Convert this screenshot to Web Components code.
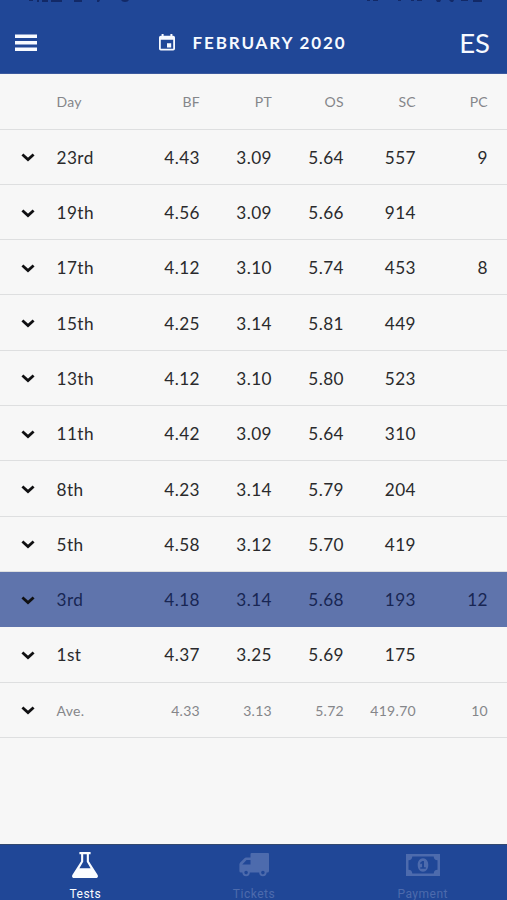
<!DOCTYPE html>
<html lang="en">
<head>
<meta charset="UTF-8">
<meta name="viewport" content="width=device-width, initial-scale=1.0">
<title>Tests</title>
<style>
    body {
        margin: 0;
        background: #f7f7f7;
        font-family: Lato, "Open Sans", sans-serif;
    }
</style>
</head>
<body>
<milk-app>
    <app-header slot="header" month="FEBRUARY 2020" lang-label="ES"></app-header>
    <tests-table></tests-table>
    <tab-bar slot="footer">
        <tab-item icon="flask" active>Tests</tab-item>
        <tab-item icon="truck">Tickets</tab-item>
        <tab-item icon="money">Payment</tab-item>
    </tab-bar>
</milk-app>

<script>
const TESTS = [
    ['23rd', '4.43', '3.09', '5.64', '557', '9'],
    ['19th', '4.56', '3.09', '5.66', '914', ''],
    ['17th', '4.12', '3.10', '5.74', '453', '8'],
    ['15th', '4.25', '3.14', '5.81', '449', ''],
    ['13th', '4.12', '3.10', '5.80', '523', ''],
    ['11th', '4.42', '3.09', '5.64', '310', ''],
    ['8th', '4.23', '3.14', '5.79', '204', ''],
    ['5th', '4.58', '3.12', '5.70', '419', ''],
    ['3rd', '4.18', '3.14', '5.68', '193', '12'],
    ['1st', '4.37', '3.25', '5.69', '175', '']
];

const ICONS = {
    flask: `
        <svg width="26" height="26" viewBox="0 0 26 26">
            <path fill="currentColor" fill-rule="evenodd" d="M7.4 0h11.2v2.3h-1.7v6.9l8.6 13.6c1 1.7.2 3.2-1.6 3.2H2.1C.3 26-.5 24.5.5 22.8L9.1 9.2V2.3H7.4zM11.2 2.3v7.5L7.4 16.3h11.2L14.8 9.8V2.3z"/>
        </svg>`,
    truck: `
        <svg width="30" height="24" viewBox="0 0 30 24">
            <path fill="currentColor" fill-rule="evenodd" d="M12.500 0H29q1 0 1 1v17q0 1.600-1.600 1.600h-.8a3.700 3.700 0 0 1-7.400 0h-9.400a3.700 3.700 0 0 1-7.400 0H2Q.4 19.600.4 18v-6.500q0-1 .8-1.900l4-4.200Q6 4.500 7.200 4.500h4.300V1q0-1 1-1zM7.500 7 3.300 11.500h8.200V7zM7.100 17.800a1.800 1.800 0 1 0 0 3.600 1.800 1.800 0 0 0 0-3.600zM23.900 17.800a1.800 1.800 0 1 0 0 3.600 1.800 1.800 0 0 0 0-3.600z"/>
        </svg>`,
    money: `
        <svg width="34" height="22" viewBox="0 0 34 22">
            <path fill="currentColor" fill-rule="evenodd" d="M0 0h34v22H0zM6.300 2.500A4 4 0 0 1 2.500 6.300v9.400a4 4 0 0 1 3.800 3.800h21.400a4 4 0 0 1 3.800-3.800V6.300a4 4 0 0 1-3.800-3.800z"/>
            <path fill="currentColor" fill-rule="evenodd" d="M17 4.300c3.300 0 5.300 3 5.300 6.700s-2 6.700-5.300 6.700-5.300-3-5.300-6.700 2-6.700 5.300-6.700zM16.200 7l-2.300 2 1 1.200 1.200-.9v3.900h-1.800v1.500h5.500v-1.500H18V7z"/>
        </svg>`
};

class MilkApp extends HTMLElement {
    constructor() {
        super();
        this.attachShadow({ mode: 'open' });
    }

    connectedCallback() {
        this.shadowRoot.innerHTML = `
            <style>
                :host {
                    display: flex;
                    flex-direction: column;
                    height: 900px;
                    overflow: hidden;
                }
                main {
                    flex: 1;
                    min-height: 0;
                    overflow: hidden;
                }
            </style>
            <slot name="header"></slot>
            <main><slot></slot></main>
            <slot name="footer"></slot>
        `;
    }
}

class AppHeader extends HTMLElement {
    constructor() {
        super();
        this.attachShadow({ mode: 'open' });
    }

    connectedCallback() {
        const month = this.getAttribute('month') || '';
        const lang = this.getAttribute('lang-label') || 'EN';

        this.shadowRoot.innerHTML = `
            <style>
                :host {
                    display: block;
                    flex: none;
                    height: 74px;
                    box-sizing: border-box;
                    background: #204797;
                    border-bottom: 1px solid #3c5a9f;
                    color: #f7faff;
                }
                .status {
                    display: block;
                    height: 12px;
                }
                .bar {
                    display: grid;
                    grid-template-columns: 1fr auto 1fr;
                    align-items: center;
                    height: 61px;
                    padding: 0 17px 0 15px;
                }
                .menu {
                    display: block;
                }
                .month {
                    display: flex;
                    align-items: center;
                    gap: 18px;
                    font-size: 17px;
                    font-weight: 700;
                    letter-spacing: 1.850px;
                    line-height: 24px;
                }
                .lang {
                    justify-self: end;
                    font-size: 27.500px;
                    line-height: 30px;
                }
            </style>
            <svg class="status" width="507" height="12" fill="#122967">
                <path d="M29 0h4v1h-4zM37 0h2v2h-2zM42 0h6v2h-6zM51 0h11v2h-11zM74 0h8v2h-8zM97 0h3l-1 2h-2zM121 0h8q-1 2-4 2t-4-2zM367 0h3v1h-3zM373 0h5v1h-5zM398 0h3v1h-3zM411 0h3v1h-3zM417 0h5v1h-5zM436 0h5l-1 2h-3zM449 0h5l-1 2h-2zM461 0h7v1h-7zM473 0h9v2h-9z"/>
            </svg>
            <div class="bar">
                <svg class="menu" width="22" height="18" viewBox="0 0 22 18" fill="currentColor">
                    <path d="M0 .5h22v3.500H0zM0 7h22v3.500H0zM0 13.500h22v3.500H0z"/>
                </svg>
                <div class="month">
                    <svg width="16" height="17" viewBox="0 0 16 17" fill="currentColor">
                        <path fill-rule="evenodd" d="M2.600 0h2v1.700h6.800V0h2v1.700h.8q1.800 0 1.800 1.800v11.200q0 1.800-1.800 1.800H1.800Q0 16.500 0 14.700V3.500q0-1.800 1.800-1.800h.8zM1.800 5.800v8.900h12.400V5.800zM8 9.200h4.200v4.200H8z"/>
                    </svg>
                    <span>${month}</span>
                </div>
                <span class="lang">${lang}</span>
            </div>
        `;
    }
}

class TestRow extends HTMLElement {
    constructor() {
        super();
        this.attachShadow({ mode: 'open' });
    }

    connectedCallback() {
        const [day, ...values] = this.getAttribute('cells').split('|');
        const chevron = this.hasAttribute('head') ? '' : `
            <svg width="14" height="9" viewBox="0 0 14 9">
                <path d="M1.400 1.500 7 6.600l5.600-5.100" fill="none" stroke="currentColor" stroke-width="2.800"/>
            </svg>`;

        this.shadowRoot.innerHTML = `
            <style>
                :host {
                    display: grid;
                    grid-template-columns: 56.500px 71.500px repeat(5, 72px);
                    align-items: center;
                    height: 55.300px;
                    padding-top: 2px;
                    box-sizing: border-box;
                    border-bottom: 1px solid #dedfe0;
                    font-size: 17.200px;
                    letter-spacing: 0.450px;
                    line-height: 24px;
                    color: #2a2a2c;
                }
                :host([head]), :host([average]) {
                    font-size: 14px;
                    letter-spacing: 0.300px;
                    color: #85868a;
                }
                :host([selected]) {
                    background: #5f74ac;
                    border-color: #5f74ac;
                    color: #182653;
                }
                .toggle {
                    display: flex;
                    padding-left: 21px;
                    color: #101012;
                }
                .value {
                    text-align: right;
                }
            </style>
            <span class="toggle">${chevron}</span>
            <span class="day">${day}</span>
            ${values.map(value => `<span class="value">${value}</span>`).join('')}
        `;
    }
}

class TestsTable extends HTMLElement {
    constructor() {
        super();
        this.attachShadow({ mode: 'open' });
    }

    connectedCallback() {
        const rows = TESTS.map(cells => {
            const selected = cells[0] === '3rd' ? 'selected' : '';
            return `<test-row cells="${cells.join('|')}" ${selected}></test-row>`;
        });

        this.shadowRoot.innerHTML = `
            <style>
                :host {
                    display: block;
                    padding-top: 0.300px;
                }
            </style>
            <test-row head cells="Day|BF|PT|OS|SC|PC"></test-row>
            ${rows.join('')}
            <test-row average cells="Ave.|4.33|3.13|5.72|419.70|10"></test-row>
        `;
    }
}

class TabBar extends HTMLElement {
    constructor() {
        super();
        this.attachShadow({ mode: 'open' });
    }

    connectedCallback() {
        this.shadowRoot.innerHTML = `
            <style>
                :host {
                    display: grid;
                    grid-template-columns: repeat(3, 1fr);
                    flex: none;
                    height: 56px;
                    box-sizing: border-box;
                    padding-left: 1px;
                    border-top: 1px solid #33496f;
                    background: #204797;
                    overflow: hidden;
                }
            </style>
            <slot></slot>
        `;
    }
}

class TabItem extends HTMLElement {
    constructor() {
        super();
        this.attachShadow({ mode: 'open' });
    }

    connectedCallback() {
        const icon = this.getAttribute('icon');

        this.shadowRoot.innerHTML = `
            <style>
                :host {
                    display: flex;
                    flex-direction: column;
                    align-items: center;
                    padding-top: 6px;
                    font-family: Roboto, sans-serif;
                    font-size: 12px;
                    letter-spacing: 0.500px;
                    line-height: 14px;
                    color: #4d6bad;
                }
                :host([active]) {
                    color: #fafcff;
                }
                .icon {
                    display: flex;
                    align-items: center;
                    height: 27px;
                    margin-bottom: 9px;
                }
            </style>
            <span class="icon">${ICONS[icon]}</span>
            <span><slot></slot></span>
        `;
    }
}

customElements.define('milk-app', MilkApp);
customElements.define('app-header', AppHeader);
customElements.define('test-row', TestRow);
customElements.define('tests-table', TestsTable);
customElements.define('tab-bar', TabBar);
customElements.define('tab-item', TabItem);
</script>
</body>
</html>
